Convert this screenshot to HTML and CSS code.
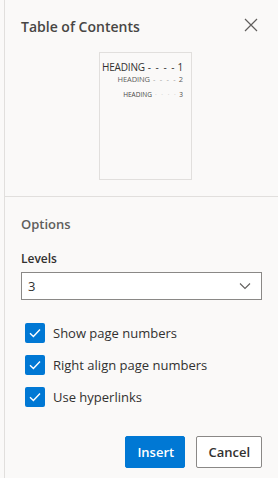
FILE: index.html
```html
<!DOCTYPE html>
<html lang="en">
<head>
  <meta charset="UTF-8">
  <link rel="stylesheet" href="styles.css">
  <title>Table of Contents</title>
</head>
<body>
  <div class="pane">
    <div class="top">
      <div class="header">
        <span class="title">Table of Contents</span>
        <svg class="close" width="14" height="14" viewBox="0 0 14 14"><path d="M1 1L13 13M13 1L1 13" stroke="#605e5c" stroke-width="1.2" fill="none"/></svg>
      </div>
      <div class="preview">
        <div class="line l1"><span>HEADING</span><span class="dots">- - - -</span><span class="num">1</span></div>
        <div class="line l2"><span>HEADING</span><span class="dots">- - - -</span><span class="num">2</span></div>
        <div class="line l3"><span>HEADING</span><span class="dots">· · · ·</span><span class="num">3</span></div>
      </div>
    </div>
    <div class="options">
      <div class="section">Options</div>
      <div class="label">Levels</div>
      <div class="select">
        <span>3</span>
        <svg width="12" height="8" viewBox="0 0 12 8"><path d="M1 1.5L6 6.5L11 1.5" stroke="#605e5c" stroke-width="1.1" fill="none"/></svg>
      </div>
      <div class="checks">
        <label class="check"><span class="box"><svg width="12" height="10" viewBox="0 0 12 10"><path d="M1 5.2L4.4 8.4L11 1.6" stroke="#fff" stroke-width="1.4" fill="none"/></svg></span>Show page numbers</label>
        <label class="check"><span class="box"><svg width="12" height="10" viewBox="0 0 12 10"><path d="M1 5.2L4.4 8.4L11 1.6" stroke="#fff" stroke-width="1.4" fill="none"/></svg></span>Right align page numbers</label>
        <label class="check"><span class="box"><svg width="12" height="10" viewBox="0 0 12 10"><path d="M1 5.2L4.4 8.4L11 1.6" stroke="#fff" stroke-width="1.4" fill="none"/></svg></span>Use hyperlinks</label>
      </div>
      <div class="buttons">
        <button class="btn primary">Insert</button>
        <button class="btn">Cancel</button>
      </div>
    </div>
  </div>
</body>
</html>
```

FILE: styles.css
```css
body {
  margin: 0;
  background: #faf9f8;
  font-family: "Open Sans", "Noto Sans", sans-serif;
  color: #323130;
}

.pane {
  margin-left: 4px;
  border-left: 1px solid #e1dfdd;
  height: 478px;
  box-sizing: border-box;
}

.top {
  border-bottom: 1px solid #e1dfdd;
  height: 197px;
  box-sizing: border-box;
  padding: 15px 0 0 16px;
}

.header {
  display: flex;
  justify-content: space-between;
  align-items: center;
  padding-right: 20px;
  height: 22px;
}

.title {
  font-size: 14px;
  font-weight: 600;
  color: #484644;
}

.close {
  margin-top: -2px;
}

.preview {
  width: 93px;
  height: 128px;
  margin: 15px 0 0 78px;
  border: 1px solid #e1dfdd;
  box-sizing: border-box;
  background: #faf9f8;
  padding: 7px 8px 0 0;
}

.line {
  display: flex;
  justify-content: flex-end;
  align-items: baseline;
  color: #323130;
  white-space: nowrap;
}

.line .dots {
  margin: 0 2px 0 3px;
  letter-spacing: 0.5px;
}

.l1 {
  font-size: 10px;
  height: 14px;
  letter-spacing: -0.2px;
}

.l1 .dots {
  letter-spacing: 1px;
}

.l2 {
  font-size: 7.5px;
  height: 16px;
  color: #605e5c;
  letter-spacing: -0.1px;
}

.l2 .dots {
  color: #a19f9d;
  letter-spacing: 1.2px;
}

.l3 {
  font-size: 6.5px;
  height: 14px;
  color: #484644;
}

.l3 .dots {
  color: #c8c6c4;
  letter-spacing: 1.5px;
}

.options {
  padding: 18px 16px 0 16px;
}

.section {
  font-size: 13px;
  font-weight: 600;
  color: #605e5c;
  height: 20px;
}

.label {
  font-size: 12px;
  font-weight: 600;
  color: #323130;
  margin-top: 15px;
  height: 18px;
}

.select {
  margin-top: 4px;
  height: 28px;
  border: 1px solid #8a8886;
  background: #fff;
  box-sizing: border-box;
  display: flex;
  align-items: center;
  justify-content: space-between;
  padding: 0 10px 0 6px;
  font-size: 13px;
}

.checks {
  margin-top: 23px;
  padding-left: 4px;
  display: flex;
  flex-direction: column;
  gap: 12px;
}

.check {
  display: flex;
  align-items: center;
  font-size: 13px;
  height: 20px;
}

.box {
  width: 20px;
  height: 20px;
  border-radius: 2px;
  background: #0078d4;
  display: flex;
  align-items: center;
  justify-content: center;
  margin-right: 8px;
}

.buttons {
  display: flex;
  justify-content: flex-end;
  gap: 11px;
  margin-top: 29px;
}

.btn {
  height: 32px;
  padding: 0 11px;
  border: 1px solid #8a8886;
  background: #fff;
  border-radius: 2px;
  font-family: "Open Sans", "Noto Sans", sans-serif;
  font-size: 13px;
  font-weight: 600;
  color: #323130;
}

.btn.primary {
  background: #0078d4;
  border-color: #0078d4;
  color: #fff;
  width: 60px;
}
```
